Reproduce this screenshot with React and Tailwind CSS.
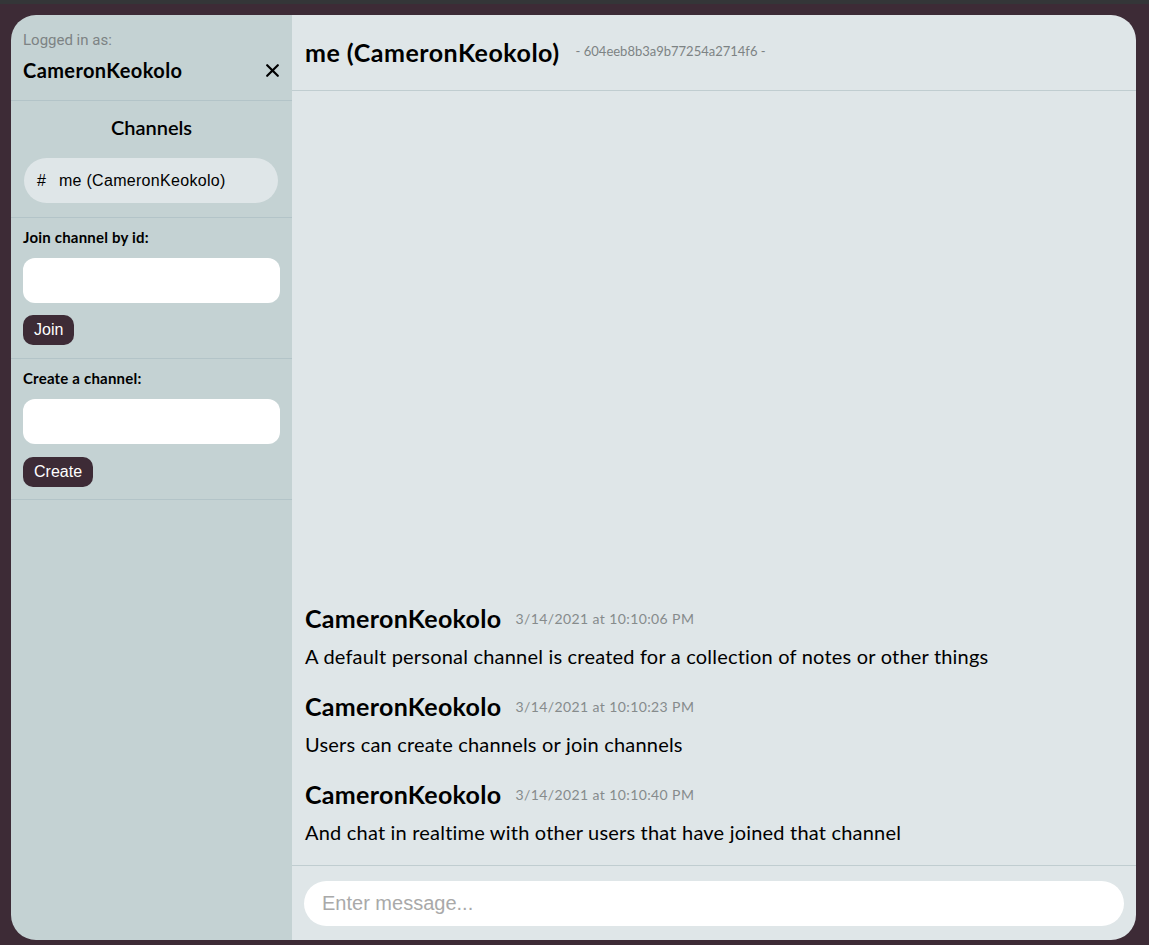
import React, { useState } from "react";

const messages = [
    {
        id: 1,
        user: "CameronKeokolo",
        time: "3/14/2021 at 10:10:06 PM",
        text: "A default personal channel is created for a collection of notes or other things",
    },
    {
        id: 2,
        user: "CameronKeokolo",
        time: "3/14/2021 at 10:10:23 PM",
        text: "Users can create channels or join channels",
    },
    {
        id: 3,
        user: "CameronKeokolo",
        time: "3/14/2021 at 10:10:40 PM",
        text: "And chat in realtime with other users that have joined that channel",
    },
];

const Sidebar = () => {
    const [joinId, setJoinId] = useState("");
    const [newChannel, setNewChannel] = useState("");

    return (
        <div className="w-[281px] flex flex-col bg-[#c4d2d3] font-['Lato',sans-serif] text-black">
            <div className="px-3 pt-[15px] pb-[15px] border-b border-[#b3c4c8]">
                <div className="text-[15px] leading-[20px] text-[#7d8384] font-['Roboto',sans-serif]">
                    Logged in as:
                </div>
                <div className="flex items-center justify-between mt-[5px]">
                    <span className="text-[20px] leading-[30px] font-bold tracking-[0.4px]">CameronKeokolo</span>
                    <svg width="13" height="13" viewBox="0 0 13 13" className="mr-[1px]">
                        <path d="M1.2 1.2 L11.8 11.8 M11.8 1.2 L1.2 11.8" stroke="#000" strokeWidth="2.2" strokeLinecap="round" />
                    </svg>
                </div>
            </div>

            <div className="px-3 pt-[14px] pb-[14px] border-b border-[#b3c4c8]">
                <h2 className="text-center text-[20px] leading-[24px] font-semibold">Channels</h2>
                <div className="mt-[19px] ml-[1px] mr-[2px] h-[45px] rounded-full bg-[#dfe6e8] flex items-center px-[13px] font-['Liberation_Sans',sans-serif] text-[16px]">
                    <span className="mr-[13px]">#</span>
                    <span className="tracking-[0.3px]">me (CameronKeokolo)</span>
                </div>
            </div>

            <div className="px-3 pt-[10px] pb-[13px] border-b border-[#b3c4c8]">
                <label className="block text-[15px] leading-[18px] font-bold tracking-[0.2px]">Join channel by id:</label>
                <input
                    value={joinId}
                    onChange={(e) => setJoinId(e.target.value)}
                    className="mt-[12px] w-full h-[45px] rounded-[12px] bg-white outline-none px-3"
                />
                <button className="mt-[12px] h-[30px] px-[11px] rounded-[10px] bg-[#3d2b36] text-white text-[16px] font-['Liberation_Sans',sans-serif]">
                    Join
                </button>
            </div>

            <div className="px-3 pt-[10px] pb-[12px] border-b border-[#b3c4c8]">
                <label className="block text-[15px] leading-[18px] font-bold tracking-[0.2px]">Create a channel:</label>
                <input
                    value={newChannel}
                    onChange={(e) => setNewChannel(e.target.value)}
                    className="mt-[12px] w-full h-[45px] rounded-[12px] bg-white outline-none px-3"
                />
                <button className="mt-[13px] h-[30px] px-[11px] rounded-[10px] bg-[#3d2b36] text-white text-[16px] font-['Liberation_Sans',sans-serif]">
                    Create
                </button>
            </div>
        </div>
    );
};

const ChatView = () => {
    const [draft, setDraft] = useState("");

    return (
        <div className="flex-1 flex flex-col bg-[#dfe6e8] font-['Lato',sans-serif] text-black min-w-0">
            <div className="h-[76px] flex items-center px-[13px] border-b border-[#c0cdd0] shrink-0">
                <h1 className="text-[25px] font-bold tracking-[0.5px]">me (CameronKeokolo)</h1>
                <span className="ml-[16px] text-[13px] text-[#7d8384] mt-[-2px]">- 604eeb8b3a9b77254a2714f6 -</span>
            </div>

            <div className="flex-1 flex flex-col justify-end px-[13px] pb-[14px]">
                {messages.map((m) => (
                    <div key={m.id} className="mb-[15px] last:mb-0">
                        <div className="flex items-center">
                            <span className="text-[25px] leading-[32px] font-bold tracking-[0.3px]">{m.user}</span>
                            <span className="ml-[14px] text-[14px] text-[#868b8c] tracking-[0.4px]">{m.time}</span>
                        </div>
                        <p className="mt-[3px] text-[20px] leading-[38px] tracking-[0.2px]">{m.text}</p>
                    </div>
                ))}
            </div>

            <div className="border-t border-[#c0cdd0] px-[12px] pt-[15px] pb-[14px] shrink-0">
                <input
                    value={draft}
                    onChange={(e) => setDraft(e.target.value)}
                    placeholder="Enter message..."
                    className="w-full h-[45px] rounded-full bg-white outline-none px-[18px] text-[20px] font-['Liberation_Sans',sans-serif] placeholder:text-[#a9a9a9]"
                />
            </div>
        </div>
    );
};

export default function App() {
    return (
        <div className="w-[1149px] h-[945px] bg-[#3d2b36] flex flex-col overflow-hidden">
            <div className="h-[4px] bg-[#343638] shrink-0"></div>
            <div className="flex-1 pt-[11px] pb-[5px] pl-[11px] pr-[13px] flex">
                <div className="flex-1 flex rounded-[25px] overflow-hidden">
                    <Sidebar />
                    <ChatView />
                </div>
            </div>
        </div>
    );
}
